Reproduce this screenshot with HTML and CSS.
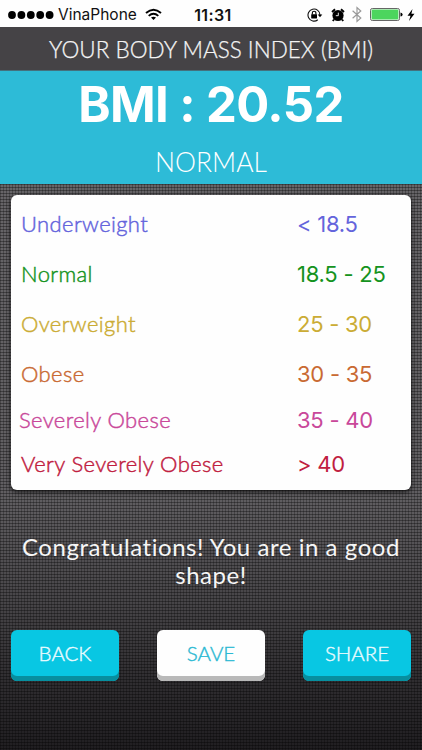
FILE: index.html
```html
<!DOCTYPE html>
<html lang="en">
  <head>
    <meta charset="utf-8">
    <title>Your Body Mass Index</title>
    <link rel="stylesheet" href="styles.css">
  </head>
  <body>
    <div class="status">
      <div class="carrier">
        <svg width="46" height="10" viewBox="0 0 46 10">
          <circle cx="4" cy="5" r="3.9"/>
          <circle cx="13.4" cy="5" r="3.9"/>
          <circle cx="22.8" cy="5" r="3.9"/>
          <circle cx="32.2" cy="5" r="3.9"/>
          <circle cx="41.6" cy="5" r="3.9"/>
        </svg>
        <span class="network">VinaPhone</span>
        <svg width="17" height="13" viewBox="0 0 17 13" fill="none" stroke="#000" stroke-width="1.9">
          <path d="M1 5Q8.500-1.500 16 5"/>
          <path d="M3.700 7.900Q8.500 3.700 13.300 7.900"/>
          <path d="M8.500 12L6 9.600Q8.500 7.700 11 9.600Z" fill="#000" stroke="none"/>
        </svg>
      </div>
      <span class="time">11:31</span>
      <div class="indicators">
        <svg class="lock" width="16" height="14" viewBox="0 0 16 14">
          <path d="M10.800 11.700A6 6 0 1 1 13 7" fill="none" stroke="#111" stroke-width="1.100"/>
          <path d="M10.700 6.500H15.300L13 9.300Z"/>
          <rect x="4.200" y="6.200" width="5.800" height="4.200" rx=".4"/>
          <path d="M5.300 6.500V5A1.800 1.800 0 0 1 8.900 5V6.500" fill="none" stroke="#000" stroke-width="1.100"/>
        </svg>
        <svg class="alarm" width="14" height="14" viewBox="0 0 14 14">
          <circle cx="7" cy="7.500" r="5.600"/>
          <path d="M1 4L4 1.300M13 4L10 1.300M3 11.500L1.800 13M11 11.500L12.200 13" stroke="#000" stroke-width="1.900"/>
          <path d="M7.300 4.700V7.700H4.800" fill="none" stroke="#fff" stroke-width=".9"/>
        </svg>
        <svg class="bluetooth" width="10" height="17" viewBox="0 0 10 17">
          <path d="M.600 4.700L8.800 12L5 15.500V1.500L8.800 5L.600 12.300" fill="none" stroke="#999" stroke-width="1.200"/>
        </svg>
        <svg class="battery" width="33" height="13" viewBox="0 0 33 13">
          <rect x=".5" y=".5" width="29" height="12" rx="1.800" fill="#fff" stroke="#666"/>
          <rect x="1.600" y="1.600" width="26.800" height="9.800" rx=".8" fill="#4cd55e"/>
          <path d="M30.500 4.400Q32.600 4.700 32.600 6.500T30.500 8.600Z"/>
        </svg>
        <svg width="8" height="12" viewBox="0 0 8 12">
          <path d="M5.500 0L.500 6.700H3.500L2 12L7.500 4.800H4.400Z"/>
        </svg>
      </div>
    </div>
    <h1 class="title">YOUR BODY MASS INDEX (BMI)</h1>
    <div class="result">
      <div class="score">BMI : 20.52</div>
      <div class="verdict">NORMAL</div>
    </div>
    <main>
      <div class="ranges">
        <div class="row underweight"><span class="name">Underweight</span><span>&lt; 18.5</span></div>
        <div class="row normal"><span class="name">Normal</span><span>18.5 - 25</span></div>
        <div class="row overweight"><span class="name">Overweight</span><span>25 - 30</span></div>
        <div class="row obese"><span class="name">Obese</span><span>30 - 35</span></div>
        <div class="row severe"><span class="name">Severely Obese</span><span>35 - 40</span></div>
        <div class="row very-severe"><span class="name">Very Severely Obese</span><span>&gt; 40</span></div>
      </div>
      <p class="message">Congratulations! You are in a good shape!</p>
      <div class="buttons">
        <button class="back">BACK</button>
        <button class="save">SAVE</button>
        <button class="share">SHARE</button>
      </div>
    </main>
  </body>
</html>
```
FILE: styles.css
```css
* {
  box-sizing: border-box;
}
body {
  margin: 0;
  height: 750px;
  display: flex;
  flex-direction: column;
  overflow: hidden;
  font-family: Lato, sans-serif;
  background: #222;
}
svg {
  display: block;
}
.status {
  height: 27px;
  padding: 2px 7px 0 8px;
  display: grid;
  grid-template-columns: 1fr auto 1fr;
  align-items: center;
  background: #fefefe;
  color: #111;
  font-family: Inter, sans-serif;
}
.carrier {
  display: flex;
  align-items: center;
}
.network {
  width: 79px;
  margin: 0 8px 0 4px;
  font-size: 15.5px;
  white-space: nowrap;
}
.time {
  padding-left: 3px;
  font-size: 16px;
  font-weight: 600;
  letter-spacing: .4px;
}
.indicators {
  display: flex;
  align-items: center;
  justify-content: flex-end;
}
.lock {
  margin-right: 8px;
}
.alarm {
  margin-right: 7px;
}
.bluetooth {
  margin-right: 8px;
}
.battery {
  margin-right: 4px;
}
.title {
  height: 44px;
  margin: 0;
  text-align: center;
  line-height: 45px;
  font-size: 22.5px;
  font-weight: 300;
  color: #f4f4f4;
  background: #454346;
  border-bottom: 1px solid #44717e;
  -webkit-text-stroke: .25px;
}
.result {
  height: 113px;
  text-align: center;
  color: #fff;
  background: #2dbbd7;
}
.score {
  height: 68px;
  line-height: 68px;
  font-family: Inter, sans-serif;
  font-size: 49px;
  font-weight: 700;
  letter-spacing: -.6px;
}
.verdict {
  line-height: 47px;
  font-size: 26.5px;
  font-weight: 300;
}
main {
  flex: 1;
  padding: 11px 11px 0;
  background:
    repeating-linear-gradient(rgba(0, 0, 0, .35) 0 1px, transparent 1px 3px),
    repeating-linear-gradient(90deg, rgba(0, 0, 0, .25) 0 1px, transparent 1px 3px),
    linear-gradient(#666467, #605e61 55%, #454346 75%, #2f2d30 88%, #201e21);
}
.ranges {
  height: 295px;
  padding: 5px 0 2px;
  display: grid;
  grid-template-rows: repeat(4, 50px) 42px 46px;
  border-radius: 6px;
  background: #fefefe;
  box-shadow: 0 2px 5px rgba(0, 0, 0, .7);
}
.row {
  display: grid;
  grid-template-columns: 276px 1fr;
  align-items: center;
  padding: 0 0 2px 10px;
  font-family: Inter, sans-serif;
  font-size: 22px;
  letter-spacing: -.25px;
}
.name {
  padding-bottom: 1px;
  font-family: Lato, sans-serif;
  font-size: 22px;
  font-weight: 300;
  letter-spacing: .38px;
  -webkit-text-stroke: .45px;
}
.underweight {
  color: #6464dc;
}
.normal {
  color: #159320;
}
.overweight {
  color: #cbac35;
}
.obese {
  color: #c96a33;
}
.severe {
  color: #c9489a;
}
.severe .name {
  margin-left: -2px;
}
.very-severe {
  color: #c0203f;
}
.message {
  height: 56px;
  margin: 43px -5px 41px;
  text-align: center;
  font-size: 24px;
  line-height: 28px;
  letter-spacing: .55px;
  color: #f6f6f6;
}
.buttons {
  display: flex;
  justify-content: space-between;
}
button {
  width: 108px;
  height: 51px;
  padding: 0 0 5px;
  border: 0;
  border-radius: 6px;
  font-family: Lato, sans-serif;
  font-size: 20.5px;
  font-weight: 300;
  color: #e9fbff;
  background: #08c7e3;
  box-shadow: inset 0 -5px #078f9f;
  -webkit-text-stroke: .4px;
}
.save {
  color: #2bb9d3;
  background: #fefefe;
  box-shadow: inset 0 -5px #b9b9b9;
}
```
